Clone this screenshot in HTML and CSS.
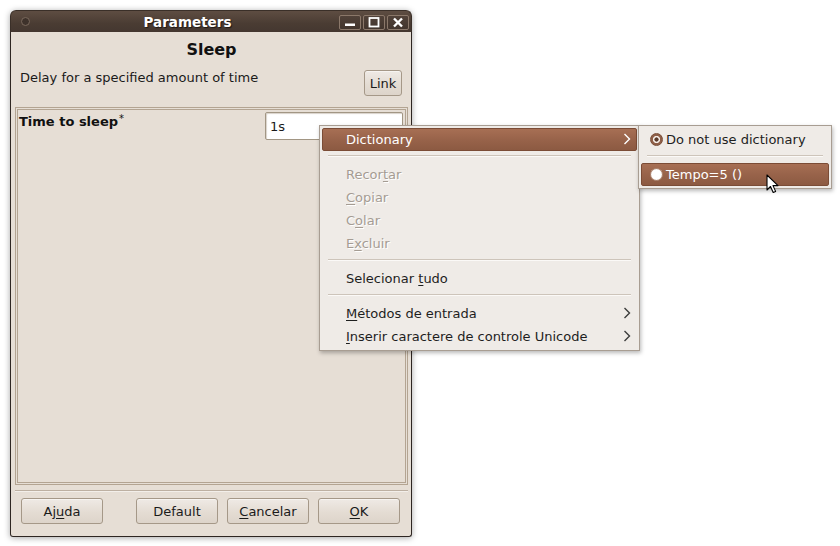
FILE: index.html
```html
<!DOCTYPE html>
<html>
<head>
<meta charset="utf-8">
<link rel="stylesheet" href="styles.css">
</head>
<body>
<div class="desktop">
  <div class="window">
    <div class="titlebar">
      <span class="menu-dot"></span>
      <span class="title">Parameters</span>
      <div class="wbtns">
        <span class="wbtn"><svg width="22" height="15" viewBox="0 0 22 15"><rect x="6" y="8.5" width="10" height="2.5" fill="#fff"/></svg></span>
        <span class="wbtn"><svg width="22" height="15" viewBox="0 0 22 15"><rect x="6.5" y="3" width="9" height="8.5" fill="none" stroke="#fff" stroke-width="1.8"/></svg></span>
        <span class="wbtn"><svg width="22" height="15" viewBox="0 0 22 15"><path d="M7 3.5 L15 11.5 M15 3.5 L7 11.5" stroke="#fff" stroke-width="2.4"/></svg></span>
      </div>
    </div>
    <div class="client">
      <div class="heading">Sleep</div>
      <div class="desc-row">
        <span class="desc">Delay for a specified amount of time</span>
        <span class="btn link">Link</span>
      </div>
      <div class="frame">
        <div class="frame-inner">
          <div class="param-row">
            <span class="plabel">Time to sleep<sup>*</sup></span>
            <div class="input">1s</div>
          </div>
        </div>
      </div>
      <div class="hsep"></div>
      <div class="actions">
        <span class="btn">Aj<u>u</u>da</span>
        <span class="btn push">Default</span>
        <span class="btn"><u>C</u>ancelar</span>
        <span class="btn"><u>O</u>K</span>
      </div>
    </div>
  </div>

  <div class="menu ctx">
    <div class="item hl">Dictionary<svg class="arrow" width="8" height="12" viewBox="0 0 8 12"><path d="M1.5 1 L6.5 6 L1.5 11" fill="none" stroke="#fff" stroke-width="1.4"/></svg></div>
    <div class="msep"></div>
    <div class="item dis">Recor<u>t</u>ar</div>
    <div class="item dis"><u>C</u>opiar</div>
    <div class="item dis">C<u>o</u>lar</div>
    <div class="item dis">E<u>x</u>cluir</div>
    <div class="msep"></div>
    <div class="item">Selecionar <u>t</u>udo</div>
    <div class="msep"></div>
    <div class="item"><u>M</u>étodos de entrada<svg class="arrow" width="8" height="12" viewBox="0 0 8 12"><path d="M1.5 1 L6.5 6 L1.5 11" fill="none" stroke="#3c3c3c" stroke-width="1.4"/></svg></div>
    <div class="item"><u>I</u>nserir caractere de controle Unicode<svg class="arrow" width="8" height="12" viewBox="0 0 8 12"><path d="M1.5 1 L6.5 6 L1.5 11" fill="none" stroke="#3c3c3c" stroke-width="1.4"/></svg></div>
  </div>

  <div class="menu sub">
    <div class="item radio"><span class="rdo on"></span>Do not use dictionary</div>
    <div class="msep"></div>
    <div class="item radio hl"><span class="rdo white"></span>Tempo=5 ()</div>
  </div>

  <svg class="cursor" width="14" height="20" viewBox="0 0 14 20">
    <path d="M1 1 L1 16 L4.5 12.5 L7.2 18.5 L9.6 17.4 L7 11.6 L12 11.6 Z" fill="#fff" stroke="#000" stroke-width="1.1" stroke-linejoin="round"/>
  </svg>
</div>
</body>
</html>
```

FILE: styles.css
```css
html, body {
  margin: 0;
  padding: 0;
  background: #ffffff;
}
body {
  font-family: "DejaVu Sans", sans-serif;
  font-size: 13px;
  color: #1a1a1a;
}
.desktop {
  position: relative;
  width: 840px;
  height: 546px;
  overflow: hidden;
  background: #ffffff;
}
.window {
  position: absolute;
  left: 10px;
  top: 10px;
  width: 402px;
  height: 527px;
  display: flex;
  flex-direction: column;
  border-radius: 6px 6px 3px 3px;
  box-shadow: 0 1px 6px rgba(0,0,0,0.35);
}
.titlebar {
  height: 22px;
  flex: none;
  display: flex;
  align-items: center;
  position: relative;
  border-radius: 6px 6px 0 0;
  background: linear-gradient(#5e4d42, #4a3c33 60%, #443730);
  border: 1px solid #3a2f28;
  border-bottom: none;
  box-sizing: border-box;
}
.menu-dot {
  width: 9px;
  height: 9px;
  border-radius: 50%;
  margin-left: 10px;
  background: #3e322b;
  border: 1px solid #7a695c;
  box-sizing: border-box;
}
.title {
  flex: 1;
  text-align: center;
  color: #fff;
  font-weight: bold;
  font-size: 13.5px;
  padding-left: 6px;
  text-shadow: 1px 1px 1px #1d1713;
}
.wbtns {
  display: flex;
  gap: 2px;
  margin-right: 2px;
  margin-top: 1px;
}
.wbtn {
  width: 22px;
  height: 15px;
  border: 1px solid #8b786a;
  border-radius: 2px;
  background: linear-gradient(#514239, #42352d);
  box-sizing: border-box;
  display: flex;
  align-items: center;
  justify-content: center;
}
.wbtn svg { display: block; margin: -1px; }
.client {
  flex: 1;
  display: flex;
  flex-direction: column;
  background: #e6ded5;
  border: 1px solid #2e2622;
  border-top: none;
  border-radius: 0 0 3px 3px;
  padding: 0 3px 12px 4px;
}
.heading {
  margin-top: 8px;
  line-height: 20px;
  text-align: center;
  font-weight: bold;
  font-size: 16px;
  color: #111;
}
.desc-row {
  margin-top: 10px;
  display: flex;
  justify-content: space-between;
  align-items: flex-start;
  padding: 0 5px 0 5px;
  height: 26px;
}
.desc {
  line-height: 15px;
}
.btn {
  height: 26px;
  box-sizing: border-box;
  display: flex;
  align-items: center;
  justify-content: center;
  border: 1px solid #a59888;
  border-radius: 3px;
  background: linear-gradient(#efeae5, #e4dcd3 55%, #ddd4ca);
  box-shadow: inset 0 1px 0 #f7f4f1;
  color: #1a1a1a;
}
.link {
  width: 38px;
  margin-right: 1px;
}
.frame {
  margin-top: 11px;
  flex: 1;
  border: 1px solid #b3a492;
  padding: 1px;
  display: flex;
}
.frame-inner {
  flex: 1;
  border: 1px solid #b3a492;
  padding: 2px 2px 0 1px;
}
.param-row {
  display: flex;
  justify-content: space-between;
  align-items: flex-start;
}
.plabel {
  font-weight: bold;
  font-size: 13px;
  margin-top: 2px;
  line-height: 16px;
  color: #111;
}
.plabel sup {
  font-size: 10px;
  font-weight: normal;
  vertical-align: top;
  position: relative;
  top: -3px;
  margin-left: 1px;
}
.input {
  width: 138px;
  height: 28px;
  box-sizing: border-box;
  background: #fff;
  border: 1px solid #a29684;
  border-radius: 2px;
  box-shadow: inset 1px 1px 1px #d9d2ca;
  padding: 6px 4px;
  line-height: 15px;
}
.hsep {
  margin-top: 5px;
  height: 1px;
  background: #bdb0a2;
  border-bottom: 1px solid #f3efea;
}
.actions {
  margin-top: 6px;
  display: flex;
  gap: 9px;
  padding: 0 8px 0 6px;
}
.actions .btn { width: 82px; flex: none; }
.actions .push { margin-left: auto; }
u { text-decoration: underline; text-underline-offset: 2px; }

/* menus */
.menu {
  position: absolute;
  background: #efebe7;
  border: 1px solid #a89d92;
  padding: 2px 2px;
  box-sizing: border-box;
  box-shadow: 1px 2px 4px rgba(0,0,0,0.28);
}
.ctx {
  left: 319px;
  top: 125px;
  width: 321px;
  height: 226px;
}
.sub {
  left: 638px;
  top: 125px;
  width: 194px;
  height: 64px;
}
.item {
  height: 23px;
  line-height: 23px;
  padding-left: 24px;
  position: relative;
  white-space: nowrap;
  color: #1e1e1e;
}
.item.hl {
  color: #fff;
  background: linear-gradient(#a76f54, #98634a 50%, #8c5a42);
  border: 1px solid #7b4c36;
  border-radius: 2px;
  line-height: 21px;
  box-sizing: border-box;
  padding-left: 23px;
}
.item.dis {
  color: #a59c93;
  text-shadow: 1px 1px 0 #ffffff;
}
.arrow {
  position: absolute;
  right: 6px;
  top: 5px;
}
.item.hl .arrow { right: 5px; top: 4px; }
.msep {
  height: 12px;
  position: relative;
}
.msep::after {
  content: "";
  position: absolute;
  left: 6px;
  right: 6px;
  top: 4px;
  height: 1px;
  background: #cdc4ba;
  border-bottom: 1px solid #fbf9f7;
}
.item.radio {
  padding-left: 25px;
}
.item.radio.hl { padding-left: 24px; }
.rdo {
  position: absolute;
  left: 9px;
  top: 5px;
  width: 13px;
  height: 13px;
  border-radius: 50%;
  box-sizing: border-box;
}
.item.hl .rdo { left: 8px; top: 4px; }
.rdo.on {
  background: radial-gradient(circle, #5a3a2a 0 1.8px, #f4ece6 2.4px 3.3px, #8f5f48 3.9px);
  border: 1px solid #7a4e38;
}
.rdo.white {
  background: radial-gradient(circle, #ffffff 0 4.5px, #f1e9e4 5.5px);
  border: 1px solid #b08a76;
}
.cursor {
  position: absolute;
  left: 766px;
  top: 174px;
}
```
